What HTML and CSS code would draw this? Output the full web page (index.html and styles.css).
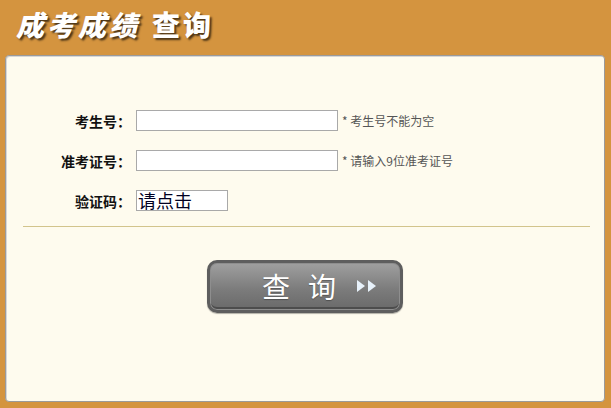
FILE: index.html
```html
<!DOCTYPE html>
<html lang="zh-CN">
<head>
  <meta charset="UTF-8">
  <title>成考成绩查询</title>
  <link rel="stylesheet" href="styles.css">
</head>
<body>

  <div class="header">
    <h1 class="title"><em>成考成绩</em><span class="title-sub">查询</span></h1>
  </div>

  <div class="panel">
    <form class="query-form">
      <div class="form-row">
        <label class="form-label">考生号：</label>
        <input type="text" class="form-input">
        <span class="form-tip">* 考生号不能为空</span>
      </div>
      <div class="form-row">
        <label class="form-label">准考证号：</label>
        <input type="text" class="form-input">
        <span class="form-tip">* 请输入9位准考证号</span>
      </div>
      <div class="form-row">
        <label class="form-label">验证码：</label>
        <span class="captcha">请点击</span>
      </div>
    </form>

    <div class="divider"></div>

    <div class="btn-wrap">
      <button type="button" class="btn-query">
        <span class="btn-text">查询</span>
        <svg class="btn-arrow" width="22" height="12" viewBox="0 0 22 12">
          <path d="M1 0 L9 6 L1 12 Z" fill="#e8f2fb"/>
          <path d="M12 0 L20 6 L12 12 Z" fill="#e8f2fb"/>
        </svg>
      </button>
    </div>
  </div>

</body>
</html>
```

FILE: styles.css
```css
* {
  box-sizing: border-box;
}
body {
  margin: 0;
  padding: 0;
  background: #d4943f;
  font-family: "Noto Sans CJK SC", "Liberation Sans", sans-serif;
  font-size: 14px;
  color: #000;
}

.header {
  height: 55px;
  padding-left: 16px;
}
.title {
  margin: 0;
  font-size: 28px;
  line-height: 48px;
  font-weight: 900;
  letter-spacing: 3px;
  color: #fff;
  text-shadow: 2px 2px 2px rgba(0, 0, 0, 0.65);
}
.title em {
  font-style: italic;
}
.title-sub {
  margin-left: 12px;
}

.panel {
  margin: 0 6px 0 5px;
  height: 347px;
  background: #fefbee;
  border: 1px solid #9a9a9a;
  border-radius: 4px;
  box-shadow: inset 1px 1px 0 #d6d6d6;
}

.query-form {
  padding-top: 54px;
}
.form-row {
  display: flex;
  align-items: center;
  height: 21px;
  margin-bottom: 19px;
}
.form-row:last-child {
  margin-bottom: 0;
}
.form-label {
  width: 130px;
  padding-right: 5px;
  text-align: right;
  font-weight: 700;
  font-size: 14px;
  color: #111;
}
.form-input {
  width: 202px;
  height: 21px;
  margin: 0;
  padding: 0 3px;
  border: 1px solid #a9a9a9;
  background: #fff;
  font-size: 13px;
}
.form-tip {
  margin-left: 4px;
  font-size: 12px;
  color: #555;
}
.captcha {
  width: 92px;
  height: 21px;
  padding-left: 1px;
  border: 1px solid #a9a9a9;
  background: #fff;
  font-size: 18px;
  line-height: 18px;
  color: #000022;
}

.divider {
  margin: 15px 14px 0 17px;
  border-top: 1px solid #d2c48c;
}

.btn-wrap {
  display: flex;
  justify-content: center;
  padding-top: 33px;
}
.btn-query {
  display: flex;
  align-items: center;
  justify-content: center;
  width: 196px;
  height: 53px;
  padding: 0 0 2px 30px;
  border: 3px solid #5e5e5e;
  border-radius: 10px;
  background: linear-gradient(#a0a0a0, #7c7c7c 55%, #696969);
  box-shadow: inset 0 0 0 1px #8e8e8e, inset 0 -3px 0 #4c4c4c, 0 1px 1px rgba(0, 0, 0, 0.3);
  cursor: pointer;
}
.btn-text {
  font-family: "Noto Sans CJK SC", sans-serif;
  font-size: 28px;
  line-height: 30px;
  letter-spacing: 18px;
  color: #fff;
  text-shadow: 0 1px 1px rgba(0, 0, 0, 0.3);
}
.btn-arrow {
  margin-left: 2px;
}
```
